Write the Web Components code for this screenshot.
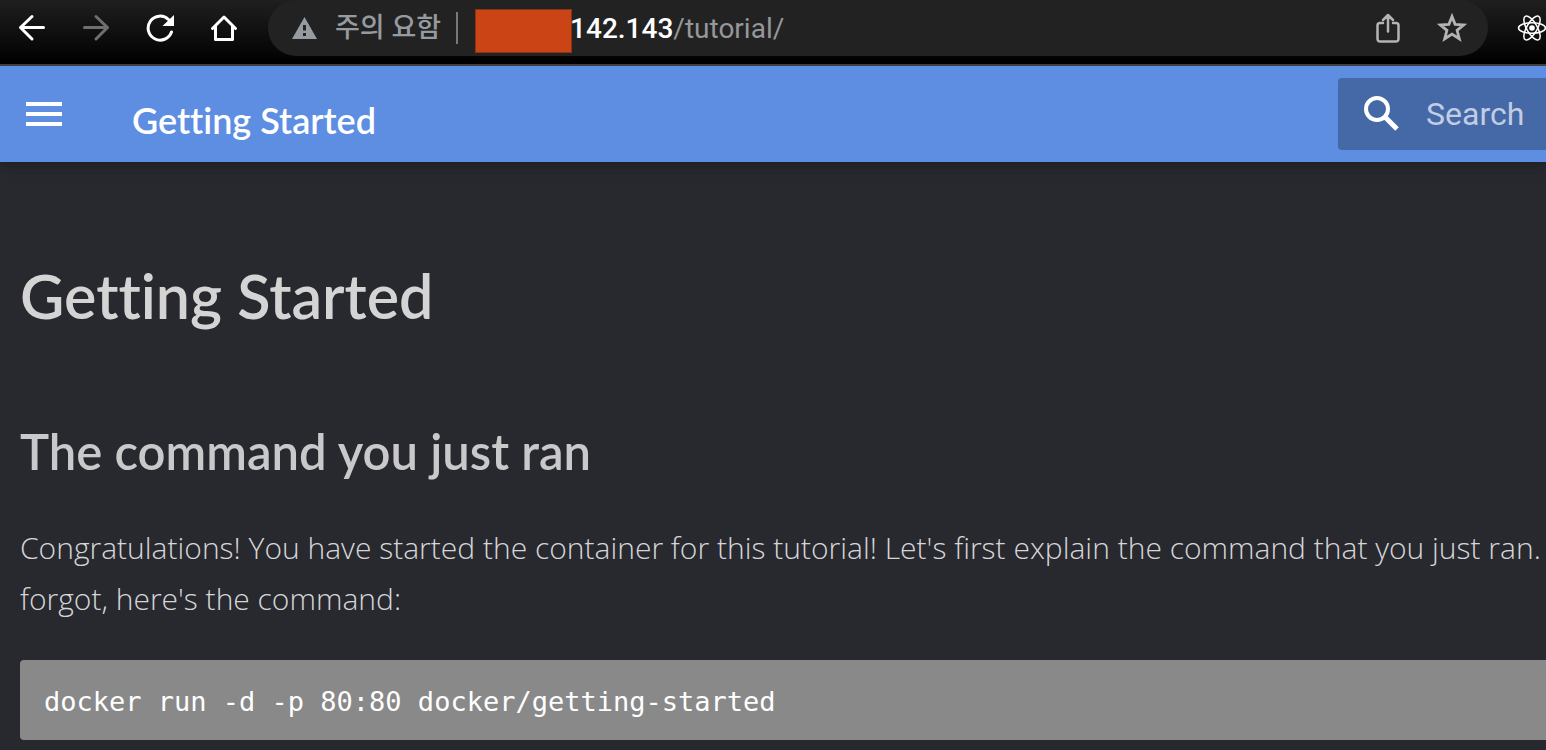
<!DOCTYPE html>
<html lang="en">
<head>
<meta charset="utf-8">
<meta name="viewport" content="width=device-width, initial-scale=1">
<title>Getting Started</title>
<style>
  html, body {
    margin: 0;
    min-height: 100%;
    background: #28292f;
  }
  body {
    overflow: hidden;
    font-family: "Open Sans", "Noto Sans CJK KR", sans-serif;
  }
</style>
</head>
<body>
<browser-bar>
  <span slot="status">주의 요함</span>
  <span slot="host">142.143</span>
  <span slot="path">/tutorial/</span>
</browser-bar>
<site-header>Getting Started</site-header>
<doc-article>
  <span slot="title">Getting Started</span>
  <span slot="section">The command you just ran</span>
  <span slot="intro">Congratulations! You have started the container for this tutorial! Let's first explain the command that you just ran.<br>forgot, here's the command:</span>
  <code-block>docker run -d -p 80:80 docker/getting-started</code-block>
</doc-article>

<script>
class BrowserBar extends HTMLElement {
  constructor() {
    super();
    this.attachShadow({ mode: 'open' });
    this.shadowRoot.innerHTML = `
      <style>
        :host {
          display: flex;
          height: 56px;
          padding-bottom: 8px;
          border-bottom: 2px solid #444446;
          background: linear-gradient(#1f1f1f, #000);
          font-family: Roboto, "Noto Sans CJK KR", sans-serif;
          font-size: 28px;
          line-height: 56px;
          color: #fff;
        }
        button {
          display: flex;
          align-items: center;
          justify-content: center;
          flex: none;
          width: 64px;
          height: 56px;
          padding: 0;
          border: 0;
          background: none;
          color: inherit;
        }
        button:disabled { color: #6f6f6f; }
        svg { display: block; flex: none; }
        nav { display: flex; margin-right: 12px; }
        .omnibox {
          display: flex;
          align-items: center;
          flex: 1;
          min-width: 0;
          padding: 0 4px 0 24px;
          border-radius: 28px;
          background: #222;
          color: #969ba0;
          white-space: nowrap;
        }
        .status { margin-left: 17px; font-size: 27px; font-weight: 500; }
        .divider {
          width: 2px;
          height: 32px;
          margin: 0 17px 0 15px;
          background: #77787a;
        }
        .mask {
          box-sizing: border-box;
          width: 97px;
          height: 44px;
          margin-top: 6px;
          border: 1px solid #8a3512;
          background: #cb4416;
        }
        .host { margin-left: -2px; color: #fff; font-weight: 500; }
        .url { flex: 1; padding-top: 2px; color: #96979a; }
        .tools { display: flex; color: #b4b4b4; }
        .extension { width: 58px; padding-left: 29px; justify-content: flex-start; overflow: hidden; }
      </style>
      <nav aria-label="Browser">
        <button aria-label="Back">
          <svg width="28" height="28" viewBox="0 0 28 28" fill="none" stroke="currentColor" stroke-width="3" stroke-linecap="round" stroke-linejoin="round"><path d="M25.500 13.500H2.500M14 2.500L2.500 13.500L14 25"/></svg>
        </button>
        <button aria-label="Forward" disabled>
          <svg width="28" height="28" viewBox="0 0 28 28" fill="none" stroke="currentColor" stroke-width="3" stroke-linecap="round" stroke-linejoin="round"><path d="M2.500 13.500H25.500M14 2.500L25.500 13.500L14 25"/></svg>
        </button>
        <button aria-label="Reload">
          <svg width="28" height="28" viewBox="0 0 28 28"><path d="M25.500 18A12 12 0 1 1 22.500 5.500" fill="none" stroke="currentColor" stroke-width="3" stroke-linecap="round"/><path d="M28 1V12H16.500Z" fill="currentColor"/></svg>
        </button>
        <button aria-label="Home">
          <svg width="28" height="28" viewBox="0 0 28 28" fill="none" stroke="currentColor" stroke-width="3" stroke-linecap="round" stroke-linejoin="round"><path d="M2.500 14.500L14 3L25.500 14.500M5.500 12.500V25.500H22.500V12.500"/></svg>
        </button>
      </nav>
      <div class="omnibox">
        <svg width="26" height="22" viewBox="0 0 26 22"><path d="M12.500 0L25 22H0Z" fill="#969ba0"/><path d="M11 8H14V13.500H11ZM11 16H14V19H11Z" fill="#222"/></svg>
        <span class="status"><slot name="status"></slot></span>
        <span class="divider"></span>
        <span class="mask"></span>
        <span class="url"><span class="host"><slot name="host"></slot></span><slot name="path"></slot></span>
        <div class="tools">
          <button aria-label="Share">
            <svg width="24" height="30" viewBox="0 0 24 30" fill="none" stroke="currentColor" stroke-width="2.500" stroke-linecap="round" stroke-linejoin="round"><path d="M7 10H4A2.500 2.500 0 0 0 1.500 12.500V26A2.500 2.500 0 0 0 4 28.500H20A2.500 2.500 0 0 0 22.500 26V12.500A2.500 2.500 0 0 0 20 10H17M12 18.500V2.500M7 7L12 2L17 7"/></svg>
          </button>
          <button aria-label="Bookmark this page">
            <svg width="30" height="30" viewBox="0 0 30 30" fill="none" stroke="currentColor" stroke-width="2.800"><path d="M15 3.500L18.100 11.300L26.700 11.900L20.100 17.300L22.300 25.800L15 21.100L7.700 25.800L9.900 17.300L3.300 11.900L11.900 11.300Z"/></svg>
          </button>
        </div>
      </div>
      <button class="extension" aria-label="React Developer Tools">
        <svg width="30" height="28" viewBox="-15 -14 30 28" fill="none" stroke="currentColor" stroke-width="1.500"><circle r="2.800" fill="currentColor" stroke="none"/><ellipse rx="13.500" ry="5.200"/><ellipse rx="13.500" ry="5.200" transform="rotate(60)"/><ellipse rx="13.500" ry="5.200" transform="rotate(120)"/></svg>
      </button>
    `;
  }
}

class SiteHeader extends HTMLElement {
  constructor() {
    super();
    this.attachShadow({ mode: 'open' });
    this.shadowRoot.innerHTML = `
      <style>
        :host {
          display: flex;
          align-items: center;
          height: 96px;
          background: #5e8ee2;
          box-shadow: 0 0 8px rgba(0, 0, 0, .2), 0 8px 16px rgba(0, 0, 0, .1);
          color: #fff;
        }
        button {
          width: 88px;
          height: 96px;
          padding: 0 26px;
          border: 0;
          background: none;
          color: inherit;
        }
        svg { display: block; flex: none; }
        .title {
          flex: 1;
          margin-left: 44px;
          padding-top: 12px;
          font-family: Lato, sans-serif;
          font-size: 36px;
          font-weight: 600;
          font-variant-ligatures: none;
          line-height: 48px;
        }
        label {
          display: flex;
          align-items: center;
          box-sizing: border-box;
          width: 208px;
          height: 72px;
          padding-left: 26px;
          border-radius: 4px 0 0 4px;
          background: #4569a7;
        }
        input {
          flex: 1;
          min-width: 0;
          margin-left: 27px;
          padding: 0;
          border: 0;
          outline: 0;
          background: none;
          color: #fff;
          font: 32px/48px Roboto, sans-serif;
        }
        input::placeholder { color: #c1cde3; opacity: 1; }
      </style>
      <button aria-label="Menu">
        <svg width="36" height="24" viewBox="0 0 36 24"><path d="M0 0H36V4H0ZM0 10H36V14H0ZM0 20H36V24H0Z" fill="currentColor"/></svg>
      </button>
      <span class="title"><slot></slot></span>
      <label>
        <svg width="35" height="36" viewBox="0 0 35 36" fill="none" stroke="currentColor"><circle cx="13" cy="13" r="11" stroke-width="4"/><path d="M21.500 21.500L33 33" stroke-width="5"/></svg>
        <input type="text" placeholder="Search" aria-label="Search">
      </label>
    `;
  }
}

class DocArticle extends HTMLElement {
  constructor() {
    super();
    this.attachShadow({ mode: 'open' });
    this.shadowRoot.innerHTML = `
      <style>
        :host {
          display: block;
          padding: 93px 0 10px 20px;
          color: #c9c9cb;
        }
        h1, h2 {
          margin: 0;
          font-family: Lato, sans-serif;
          font-weight: 600;
          font-variant-ligatures: none;
          white-space: nowrap;
        }
        h1 { margin-bottom: 78px; color: #d4d4d4; font-size: 61px; line-height: 82px; }
        h2 { margin-bottom: 35px; font-size: 49px; line-height: 72px; }
        p {
          margin: 0 0 36px;
          color: #d6d6d8;
          font-size: 30px;
          font-weight: 300;
          line-height: 51px;
          white-space: nowrap;
        }
      </style>
      <h1><slot name="title"></slot></h1>
      <h2><slot name="section"></slot></h2>
      <p><slot name="intro"></slot></p>
      <slot></slot>
    `;
  }
}

class CodeBlock extends HTMLElement {
  constructor() {
    super();
    this.attachShadow({ mode: 'open' });
    this.shadowRoot.innerHTML = `
      <style>
        :host {
          display: block;
          border-radius: 4px 0 0 4px;
          background: #89898a;
          color: #fff;
        }
        pre {
          margin: 0;
          padding: 22px 24px 18px;
          font: 27px/40px "DejaVu Sans Mono", monospace;
        }
        code { font: inherit; }
      </style>
      <pre><code><slot></slot></code></pre>
    `;
  }
}

customElements.define('browser-bar', BrowserBar);
customElements.define('site-header', SiteHeader);
customElements.define('doc-article', DocArticle);
customElements.define('code-block', CodeBlock);
</script>
</body>
</html>
